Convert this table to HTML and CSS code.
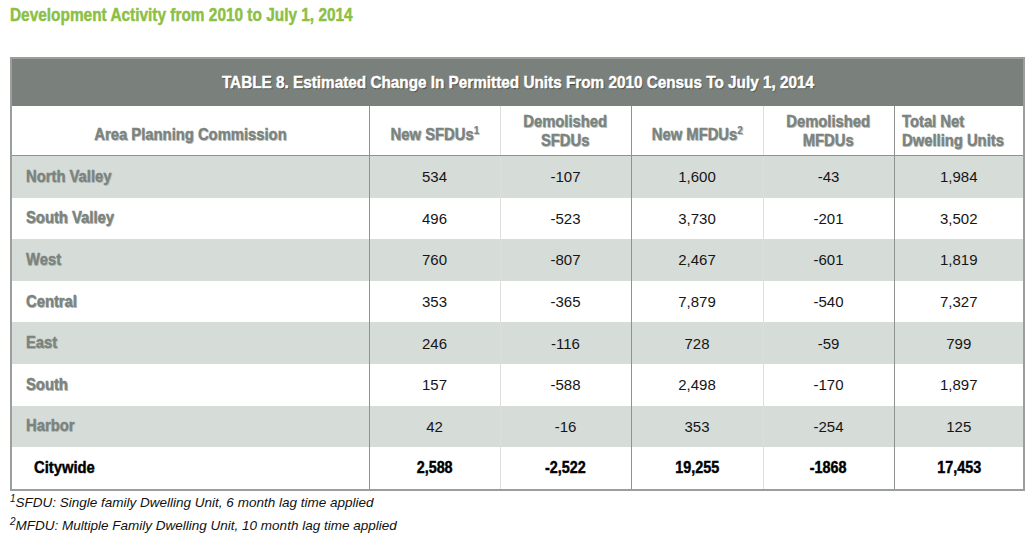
FILE: index.html
```html
<!DOCTYPE html>
<html>
<head>
<meta charset="utf-8">
<link rel="stylesheet" href="styles.css">
</head>
<body>
<div class="page">
  <h1 class="heading"><span class="cn">Development Activity from 2010 to July 1, 2014</span></h1>
  <table class="data">
    <colgroup>
      <col class="c1"><col class="c2"><col class="c3"><col class="c4"><col class="c5"><col class="c6">
    </colgroup>
    <thead>
      <tr class="title-row"><th colspan="6"><span class="cn mid wide">TABLE 8. Estimated Change In Permitted Units From 2010 Census To July 1, 2014</span></th></tr>
      <tr class="head-row">
        <th class="single"><span class="cn mid">Area Planning Commission</span></th>
        <th class="dark single"><span class="cn mid">New SFDUs<sup>1</sup></span></th>
        <th><span class="cn mid">Demolished<br>SFDUs</span></th>
        <th class="dark single"><span class="cn mid">New MFDUs<sup>2</sup></span></th>
        <th><span class="cn mid">Demolished<br>MFDUs</span></th>
        <th class="left dark"><span class="cn">Total Net<br>Dwelling Units</span></th>
      </tr>
    </thead>
    <tbody>
      <tr class="band"><td class="label"><span class="cn">North Valley</span></td><td>534</td><td>-107</td><td>1,600</td><td>-43</td><td>1,984</td></tr>
      <tr><td class="label"><span class="cn">South Valley</span></td><td>496</td><td>-523</td><td>3,730</td><td>-201</td><td>3,502</td></tr>
      <tr class="band"><td class="label"><span class="cn">West</span></td><td>760</td><td>-807</td><td>2,467</td><td>-601</td><td>1,819</td></tr>
      <tr><td class="label"><span class="cn">Central</span></td><td>353</td><td>-365</td><td>7,879</td><td>-540</td><td>7,327</td></tr>
      <tr class="band"><td class="label"><span class="cn">East</span></td><td>246</td><td>-116</td><td>728</td><td>-59</td><td>799</td></tr>
      <tr><td class="label"><span class="cn">South</span></td><td>157</td><td>-588</td><td>2,498</td><td>-170</td><td>1,897</td></tr>
      <tr class="band"><td class="label"><span class="cn">Harbor</span></td><td>42</td><td>-16</td><td>353</td><td>-254</td><td>125</td></tr>
      <tr class="total"><td class="label"><span class="cn">Citywide</span></td><td><span class="cn mid">2,588</span></td><td><span class="cn mid">-2,522</span></td><td><span class="cn mid">19,255</span></td><td><span class="cn mid">-1868</span></td><td><span class="cn mid">17,453</span></td></tr>
    </tbody>
  </table>
  <div class="notes">
    <p><sup>1</sup>SFDU: Single family Dwelling Unit, 6 month lag time applied</p>
    <p><sup>2</sup>MFDU: Multiple Family Dwelling Unit, 10 month lag time applied</p>
  </div>
</div>
</body>
</html>
```
FILE: styles.css
```css
html, body {
  margin: 0;
  padding: 0;
  background: #ffffff;
}
.page {
  padding: 5px 0 0 10px;
  width: 1014px;
}
.cn {
  display: inline-block;
  transform: scaleX(0.87);
  transform-origin: left center;
  white-space: nowrap;
  -webkit-text-stroke: 0.45px currentColor;
}
.cn.mid {
  transform-origin: center center;
}
.cn.wide {
  transform: scaleX(0.9);
}
.heading {
  margin: 0;
  font-family: "Liberation Sans", Arial, sans-serif;
  font-weight: bold;
  font-size: 17.5px;
  line-height: 21px;
  color: #8cbf45;
}
.heading .cn {
  transform: scaleX(0.88);
}
.data {
  margin-top: 31px;
  border-collapse: collapse;
  table-layout: fixed;
  width: 1013px;
  border: 2px solid #9a9f9b;
  font-family: "Liberation Sans", Arial, sans-serif;
}
.c1 { width: 358px; }
.c2 { width: 131px; }
.c3 { width: 131px; }
.c4 { width: 132px; }
.c5 { width: 131px; }
.c6 { width: 130px; }
.title-row th {
  background: #7a817c;
  height: 47px;
  padding: 0;
  color: #ffffff;
  font-weight: bold;
  font-size: 17px;
  text-shadow: 1px 1px 1px #3c423d;
  text-align: center;
}
.head-row th {
  height: 49px;
  padding: 0 4px;
  color: #7b837e;
  font-weight: bold;
  font-size: 17px;
  line-height: 19px;
  text-align: center;
  text-shadow: 1px 1px 0 #c4c8c5;
  border-bottom: 1px solid #8e938f;
  border-left: 1px solid #dcdfdc;
}
.head-row th.single {
  padding-top: 8px;
  height: 41px;
}
.head-row th:first-child { border-left: none; }
.head-row th.dark, .data td:nth-child(2), .data td:nth-child(4), .data td:nth-child(6) {
  border-left: 1px solid #8e938f;
}
.head-row th.left { text-align: left; padding-left: 7px; }
.head-row sup {
  font-size: 11.5px;
  line-height: 0;
  vertical-align: 6px;
  -webkit-text-stroke: 0.2px currentColor;
}
.data td {
  height: 41.6px;
  padding: 0;
  text-align: center;
  font-size: 15px;
  color: #151515;
  border-left: 1px solid #dcdfdc;
}
.data td.label {
  text-align: left;
  padding-left: 14px;
  border-left: none;
  font-weight: bold;
  font-size: 17px;
  color: #7b837e;
  text-shadow: 1px 1px 0 #b8bdb9;
}
.band td { background: #d6dcd8; }
.total td {
  font-weight: bold;
  font-size: 16.5px;
  color: #000000;
}
.total td.label {
  color: #000000;
  padding-left: 22px;
  text-shadow: none;
}
.notes {
  margin-top: 0;
  font-family: "Liberation Sans", Arial, sans-serif;
  font-style: italic;
  font-size: 13.5px;
  color: #111111;
}
.notes p {
  margin: 0;
  line-height: 23px;
}
.notes sup {
  font-size: 10px;
  line-height: 0;
  vertical-align: 5px;
}
```
